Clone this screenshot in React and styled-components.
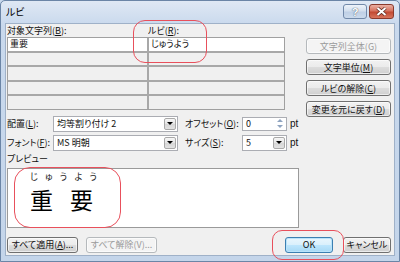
import React from 'react'
import styled, { createGlobalStyle } from 'styled-components'

const Global = createGlobalStyle`
  html, body {
    margin: 0;
    padding: 0;
    background: #c8d8ec;
  }
  body {
    font-family: 'Noto Sans CJK JP', 'Noto Sans', sans-serif;
    font-size: 9px;
    font-feature-settings: 'palt';
    color: #111;
  }
`

const Window = styled.div`
  position: relative;
  box-sizing: border-box;
  width: 400px;
  height: 262px;
  display: flex;
  flex-direction: column;
  background: linear-gradient(#dfe8f4, #c9d9ed 24px, #c4d5ea);
  border: 1px solid #6b85a6;
  border-radius: 5px 5px 0 0;
  overflow: hidden;
`

const TitleBar = styled.div`
  height: 22px;
  display: flex;
  align-items: flex-start;
  padding: 0 5px 0 5px;
`

const Title = styled.div`
  font-size: 10px;
  line-height: 21px;
  color: #000;
`

const CaptionGroup = styled.div`
  margin-left: auto;
  margin-top: 3px;
  display: flex;
  gap: 2px;
`

const CaptionButton = styled.div`
  box-sizing: border-box;
  width: ${p => (p.$close ? '25px' : '24px')};
  height: 15px;
  display: flex;
  align-items: center;
  justify-content: center;
  border: 1px solid ${p => (p.$close ? '#8a3a2c' : '#7189a9')};
  border-radius: 3px;
  background: ${p =>
    p.$close
      ? 'linear-gradient(#eab1a4, #d6735f 45%, #c24a33 55%, #d8755d)'
      : 'linear-gradient(#eef3f9, #d3dfee 45%, #bfd0e6 55%, #cbdaec)'};
  color: #fff;
  font-family: 'Liberation Sans', sans-serif;
  font-weight: bold;
  font-size: 11px;
  text-shadow: 0 0 1px #56657a, 0 0 1px #56657a;
`

const Body = styled.div`
  flex: 1;
  margin: 0 4px 5px 4px;
  border: 1px solid #9fb1c8;
  background: #f0f0f0;
  padding: 0 3px 0 1px;
  display: flex;
  flex-direction: column;
`

const MainRow = styled.div`
  display: flex;
  justify-content: space-between;
`

const LeftCol = styled.div`
  width: 294px;
  display: flex;
  flex-direction: column;
`

const RightCol = styled.div`
  width: 85px;
  display: flex;
  flex-direction: column;
  gap: 5px;
  padding-top: 14px;
`

const LabelRow = styled.div`
  height: 13px;
  display: grid;
  grid-template-columns: 141px 1fr;
`

const Label = styled.span`
  white-space: nowrap;
  line-height: ${p => p.$lh || '16px'};
  padding-left: ${p => p.$pl || '0'};
  overflow: hidden;
`

const Key = styled.span`
  text-decoration: underline;
`

const Table = styled.div`
  box-sizing: border-box;
  width: 278px;
  display: grid;
  grid-template-columns: 139px 1fr;
  grid-auto-rows: 12.5px;
  gap: 2px;
  background: #a8a8a8;
  border: 1px solid #a0a0a0;
`

const Cell = styled.div`
  background: ${p => (p.$white ? '#fff' : '#f0f0f0')};
  padding-left: 2px;
  line-height: 12.5px;
  white-space: nowrap;
  overflow: hidden;
`

const Button = styled.div`
  box-sizing: border-box;
  height: 16px;
  width: ${p => p.$w || '85px'};
  display: flex;
  align-items: center;
  justify-content: center;
  border: 1px solid
    ${p => (p.$default ? '#3c7fb1' : p.$disabled ? '#b5b9bc' : '#707070')};
  border-radius: 3px;
  background: ${p =>
    p.$default
      ? 'linear-gradient(#eaf6fd, #d9f0fc 50%, #bee6fd 50%, #a7d9f5)'
      : p.$disabled
      ? '#f4f4f4'
      : 'linear-gradient(#f2f2f2, #ebebeb 50%, #dddddd 50%, #cfcfcf)'};
  color: ${p => (p.$disabled ? '#9a9a9a' : '#111')};
  white-space: nowrap;
  box-shadow: ${p =>
    p.$default ? 'inset 0 0 0 1px #b9e3fa' : 'inset 0 0 0 1px rgba(255,255,255,0.6)'};
`

const OptionRow = styled.div`
  display: grid;
  grid-template-columns: 46px 125px 64px 45px auto;
  align-items: center;
  height: 16px;
  margin-top: ${p => p.$mt || '3px'};
`

const Combo = styled.div`
  box-sizing: border-box;
  height: ${p => p.$h || '16px'};
  display: flex;
  align-items: center;
  background: #fff;
  border: 1px solid #abadb3;
  padding-left: 3px;
  white-space: nowrap;
`

const DropButton = styled.span`
  box-sizing: border-box;
  margin-left: auto;
  margin-right: 1px;
  width: 12px;
  height: 12px;
  border: 1px solid #a9a9a9;
  border-radius: 2px;
  background: linear-gradient(#f7f7f7, #e4e4e4 50%, #d6d6d6 50%, #e2e2e2);
  display: flex;
  align-items: center;
  justify-content: center;
  &::after {
    content: '';
    border-left: 3px solid transparent;
    border-right: 3px solid transparent;
    border-top: 3px solid #000;
  }
`

const Spin = styled.span`
  margin-left: auto;
  margin-right: 1px;
  width: 11px;
  height: 12px;
  display: flex;
  flex-direction: column;
  align-items: center;
  justify-content: space-around;
`

const Arrow = styled.span`
  border-left: 3px solid transparent;
  border-right: 3px solid transparent;
  ${p => (p.$up ? 'border-bottom' : 'border-top')}: 3px solid #8fa4c0;
`

const Unit = styled.span`
  padding-left: 3px;
  font-size: 10px;
  font-family: 'Liberation Sans', sans-serif;
`

const PreviewLabel = styled.div`
  margin-top: 1px;
  height: 14px;
  line-height: 14px;
`

const PreviewBox = styled.div`
  box-sizing: border-box;
  margin-top: 2px;
  width: 292px;
  height: 60px;
  background: #fff;
  border: 1px solid #9a9a9a;
  padding-left: 22px;
`

const Sample = styled.div`
  display: inline-flex;
  flex-direction: column;
`

const RubyLine = styled.div`
  width: 67px;
  display: flex;
  justify-content: space-between;
  margin-top: 2px;
  font-size: 9px;
  line-height: 12px;
  color: #222;
`

const BaseText = styled.div`
  margin-top: 3px;
  font-size: 23px;
  line-height: 26px;
  letter-spacing: 17px;
  color: #000;
`

const BottomRow = styled.div`
  margin-top: 9px;
  display: flex;
  align-items: center;
  gap: 8px;
`

const Spacer = styled.div`
  flex: 1;
`

const Mark = styled.div`
  position: absolute;
  left: ${p => p.$x}px;
  top: ${p => p.$y}px;
  width: ${p => p.$w}px;
  height: ${p => p.$h}px;
  border: 1px solid #e8505c;
  border-radius: ${p => p.$r}px;
  pointer-events: none;
`

const rows = [
  ['重要', 'じゅうよう'],
  ['', ''],
  ['', ''],
  ['', ''],
  ['', ''],
]

export default function App() {
  return (
    <>
      <Global />
      <Window>
        <TitleBar>
          <Title>ルビ</Title>
          <CaptionGroup>
            <CaptionButton>?</CaptionButton>
            <CaptionButton $close>
              <svg width="11" height="9" viewBox="0 0 11 9">
                <path d="M1.5 1 L9.5 8 M9.5 1 L1.5 8" stroke="#5a2a20" strokeWidth="3.4" />
                <path d="M1.5 1 L9.5 8 M9.5 1 L1.5 8" stroke="#fff" strokeWidth="2" />
              </svg>
            </CaptionButton>
          </CaptionGroup>
        </TitleBar>
        <Body>
          <MainRow>
            <LeftCol>
              <LabelRow>
                <Label $lh="13px">対象文字列(<Key>B</Key>):</Label>
                <Label $lh="13px">ルビ(<Key>R</Key>):</Label>
              </LabelRow>
              <Table>
                {rows.map((r, i) => (
                  <React.Fragment key={i}>
                    <Cell $white={i === 0}>{r[0]}</Cell>
                    <Cell $white={i === 0}>{r[1]}</Cell>
                  </React.Fragment>
                ))}
              </Table>
              <OptionRow $mt="6px">
                <Label>配置(<Key>L</Key>):</Label>
                <Combo>
                  均等割り付け 2
                  <DropButton />
                </Combo>
                <Label $pl="7px">オフセット(<Key>O</Key>):</Label>
                <Combo $h="14px">
                  0
                  <Spin>
                    <Arrow $up />
                    <Arrow />
                  </Spin>
                </Combo>
                <Unit>pt</Unit>
              </OptionRow>
              <OptionRow>
                <Label>フォント(<Key>F</Key>):</Label>
                <Combo>
                  MS 明朝
                  <DropButton />
                </Combo>
                <Label $pl="7px">サイズ(<Key>S</Key>):</Label>
                <Combo>
                  5
                  <DropButton />
                </Combo>
                <Unit>pt</Unit>
              </OptionRow>
              <PreviewLabel>プレビュー</PreviewLabel>
              <PreviewBox>
                <Sample>
                  <RubyLine>
                    <span>じ</span>
                    <span>ゅ</span>
                    <span>う</span>
                    <span>よ</span>
                    <span>う</span>
                  </RubyLine>
                  <BaseText>重要</BaseText>
                </Sample>
              </PreviewBox>
            </LeftCol>
            <RightCol>
              <Button $disabled>文字列全体(G)</Button>
              <Button>
                文字単位(<Key>M</Key>)
              </Button>
              <Button>
                ルビの解除(<Key>C</Key>)
              </Button>
              <Button>
                変更を元に戻す(<Key>D</Key>)
              </Button>
            </RightCol>
          </MainRow>
          <BottomRow>
            <Button $w="71px">
              すべて適用(<Key>A</Key>)...
            </Button>
            <Button $w="71px" $disabled>
              すべて解除(V)...
            </Button>
            <Spacer />
            <Button $w="48px" $default>
              OK
            </Button>
            <Button $w="48px" style={{ marginLeft: 2 }}>
              キャンセル
            </Button>
          </BottomRow>
        </Body>
        <Mark $x={132} $y={19} $w={72} $h={41} $r={12} />
        <Mark $x={13} $y={166} $w={105} $h={59} $r={16} />
        <Mark $x={271} $y={229} $w={70} $h={28} $r={10} />
      </Window>
    </>
  )
}
